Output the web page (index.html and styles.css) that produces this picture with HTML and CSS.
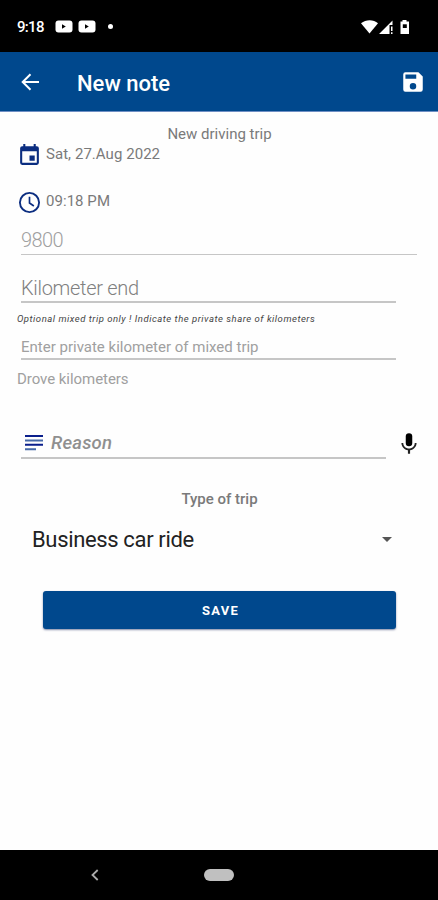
FILE: index.html
```html
<!DOCTYPE html>
<html lang="en">

<head>
  <meta charset="UTF-8" />
  <meta name="viewport" content="width=device-width, initial-scale=1.0" />
  <title>New note</title>
  <link rel="stylesheet" href="styles.css">
</head>

<body>
  <div class="statusbar">
    <span class="clock">9:18</span>
    <svg class="video" width="18" height="13" viewBox="0 0 18 13">
      <rect x="0.5" y="0.5" width="17" height="12" rx="3" fill="#fff" />
      <path d="M7 4.300v4.400l3.800-2.200z" fill="#000" />
    </svg>
    <svg class="video" width="18" height="13" viewBox="0 0 18 13">
      <rect x="0.5" y="0.5" width="17" height="12" rx="3" fill="#fff" />
      <path d="M7 4.300v4.400l3.800-2.200z" fill="#000" />
    </svg>
    <span class="dot"></span>
    <svg class="signals" width="50" height="18" viewBox="0 0 50 18">
      <path d="M0 5.200C5 1.200 12.500 1.200 17 5.200L8.500 15.600z" fill="#fff" />
      <path d="M18 16L31.500 2.500V7h-3v9z" fill="#fff" />
      <path d="M30 8.500h1.500v4.500H30zM30 14.200h1.500V16H30z" fill="#fff" />
      <path d="M39.500 3.500h2V2h4v1.500h2.500V16h-8.500z" fill="#fff" />
      <rect x="41.800" y="6.300" width="4" height="3.700" fill="#000" />
    </svg>
  </div>

  <header class="appbar">
    <svg class="back" width="24" height="24" viewBox="0 0 24 24">
      <path d="M21 12H4.500M12.500 4.300L4.700 12l7.800 7.700" fill="none" stroke="#fff" stroke-width="2" />
    </svg>
    <h1>New note</h1>
    <svg class="disk" width="26" height="26" viewBox="0 0 24 24">
      <path d="M17 3H5a2 2 0 0 0-2 2v14a2 2 0 0 0 2 2h14a2 2 0 0 0 2-2V7l-4-4zm-5 16a3 3 0 1 1 0-6 3 3 0 0 1 0 6zm3-10H5V5h10v4z" fill="#fff" />
    </svg>
  </header>

  <main>
    <p class="trip-title"><span>New driving trip</span></p>

    <div class="row date">
      <svg width="25" height="25" viewBox="0 0 24 24">
        <path d="M17 12h-5v5h5v-5zM16 1v2H8V1H6v2H5a2 2 0 0 0-2 2v14a2 2 0 0 0 2 2h14a2 2 0 0 0 2-2V5a2 2 0 0 0-2-2h-1V1h-2zm3 18H5V8h14v11z" fill="#0b2d80" />
      </svg>
      <span>Sat, 27.Aug 2022</span>
    </div>

    <div class="row time">
      <svg width="25" height="25" viewBox="0 0 24 24">
        <circle cx="12" cy="12" r="9.200" fill="none" stroke="#0b2d80" stroke-width="1.800" />
        <path d="M12 6.500v6l4.200 2.800" fill="none" stroke="#0b2d80" stroke-width="1.600" />
      </svg>
      <span>09:18 PM</span>
    </div>

    <div class="field start"><span>9800</span></div>
    <div class="field end"><span>Kilometer end</span></div>
    <p class="hint"><span>Optional mixed trip only ! Indicate the private share of kilometers</span></p>
    <div class="field private"><span>Enter private kilometer of mixed trip</span></div>
    <p class="drove"><span>Drove kilometers</span></p>

    <div class="reason-row">
      <div class="field reason">
        <svg width="18" height="16" viewBox="0 0 18 16">
          <path d="M0 1h18M0 9.800h18" stroke="#0b1f8c" stroke-width="2" />
          <path d="M0 5.500h18M0 14.200h11" stroke="#4669a8" stroke-width="2" />
        </svg>
        <span>Reason</span>
      </div>
      <svg class="mic" width="26" height="26" viewBox="0 0 24 24">
        <path d="M12 14a3 3 0 0 0 3-3V5a3 3 0 0 0-6 0v6a3 3 0 0 0 3 3z" fill="#000" />
        <path d="M17.300 11c0 3-2.540 5.100-5.300 5.100S6.700 14 6.700 11H5c0 3.410 2.720 6.230 6 6.720V21h2v-3.280c3.280-.48 6-3.300 6-6.720h-1.700z" fill="#222" />
      </svg>
    </div>

    <p class="type-title"><span>Type of trip</span></p>
    <div class="select">
      <span>Business car ride</span>
      <svg width="10" height="5" viewBox="0 0 10 5">
        <path d="M0 0h10L5 5z" fill="#555" />
      </svg>
    </div>

    <button class="save"><span>SAVE</span></button>
  </main>

  <footer class="navbar">
    <svg class="nav-back" width="8" height="12" viewBox="0 0 8 12">
      <path d="M6.700 1L1.500 6l5.200 5" fill="none" stroke="#aaa" stroke-width="1.800" />
    </svg>
    <span class="pill"></span>
  </footer>
</body>

</html>
```
FILE: styles.css
```css
* {
  box-sizing: border-box;
}

body {
  margin: 0;
  height: 900px;
  display: flex;
  flex-direction: column;
  background-color: #fefefe;
  font-family: Roboto, "Liberation Sans", sans-serif;
  color: #7a7a7a;
}

h1,
p {
  margin: 0;
}

svg {
  flex: none;
}

span {
  white-space: nowrap;
}

.statusbar {
  height: 52px;
  padding: 1px 27px 0 17px;
  display: flex;
  align-items: center;
  background-color: #000;
}

.clock {
  width: 38px;
  font-size: 15px;
  font-weight: 500;
  letter-spacing: -0.7px;
  color: #fff;
}

.video {
  margin-right: 5px;
}

.dot {
  width: 5px;
  height: 5px;
  margin-left: 7px;
  border-radius: 50%;
  background-color: #fff;
}

.signals {
  margin-left: auto;
}

.appbar {
  height: 60px;
  padding: 1px 12px 0 18px;
  display: flex;
  align-items: center;
  background-color: #00488d;
  border-bottom: 1px solid #6f8fc4;
}

.appbar h1 {
  margin: 2px 0 0 35px;
  font-size: 22px;
  font-weight: 500;
  color: #fff;
}

.disk {
  margin-left: auto;
}

main {
  flex: 1;
  display: flex;
  flex-direction: column;
  padding: 12px 17px 0;
}

.trip-title,
.type-title {
  height: 20px;
  line-height: 20px;
  font-size: 15px;
  text-align: center;
}

.trip-title {
  padding-left: 1px;
}

.row {
  height: 22px;
  display: flex;
  align-items: center;
  gap: 4px;
  font-size: 15px;
  letter-spacing: 0.05px;
}

.row span {
  margin-top: -2px;
}

.time {
  margin-top: 25px;
}

.field {
  margin-left: 4px;
  display: flex;
  align-items: center;
  border-bottom: 2px solid #c6c6c6;
  color: #a0a0a0;
}

.start {
  width: 396px;
  height: 30px;
  margin-top: 12px;
  border-bottom-width: 1px;
  font-size: 20px;
  font-weight: 300;
  letter-spacing: -0.6px;
  color: #a0a0a0;
}

.end {
  width: 375px;
  height: 29px;
  margin-top: 19px;
  font-size: 20px;
  font-weight: 300;
  letter-spacing: -0.3px;
  color: #808080;
}

.hint {
  height: 14px;
  margin-top: 9px;
  line-height: 14px;
  font-size: 9.500px;
  font-style: italic;
  letter-spacing: 0.52px;
  color: #444;
}

.private {
  width: 375px;
  height: 24px;
  margin-top: 10px;
  font-size: 15px;
}

.drove {
  height: 20px;
  margin-top: 9px;
  line-height: 20px;
  font-size: 15px;
  letter-spacing: -0.05px;
  color: #a0a0a0;
}

.reason-row {
  height: 30px;
  margin-top: 40px;
  display: flex;
}

.reason {
  flex: none;
  width: 365px;
  padding-left: 4px;
  gap: 8px;
  font-size: 18.500px;
  font-weight: 500;
  font-style: italic;
  letter-spacing: 0.2px;
  color: #909090;
}

.mic {
  margin: 2px 0 0 10px;
}

.type-title {
  margin-top: 30px;
  padding-left: 1px;
  font-weight: 500;
}

.select {
  height: 30px;
  margin-top: 15px;
  padding: 0 29px 0 15px;
  display: flex;
  align-items: center;
  justify-content: space-between;
  font-size: 22px;
  letter-spacing: -0.35px;
  color: #222;
}

.save {
  width: 353px;
  height: 38px;
  margin: 37px 0 0 26px;
  padding: 0 0 0 2px;
  border: 0;
  border-radius: 3px;
  background-color: #00488d;
  box-shadow: 0 1px 2px rgba(0, 20, 80, 0.5);
  font-family: inherit;
  font-size: 13px;
  font-weight: 700;
  letter-spacing: 1.2px;
  color: #fff;
}

.navbar {
  height: 50px;
  padding-left: 91px;
  display: flex;
  align-items: center;
  background-color: #000;
}

.pill {
  width: 30px;
  height: 12px;
  margin-left: 105px;
  border-radius: 6px;
  background-color: #c0c0c0;
}
```
